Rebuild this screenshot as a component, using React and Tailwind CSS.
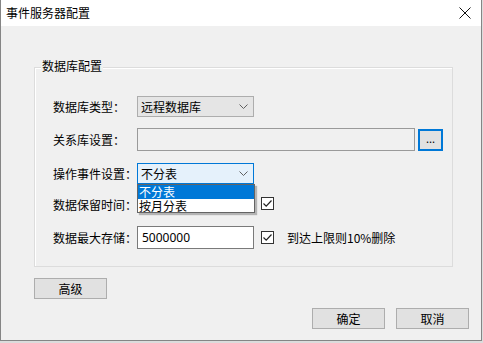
import React from "react";

const F = { fontFamily: '"Noto Sans CJK SC", "Noto Sans", sans-serif' };

function Chevron({ color = "#606060" }) {
  return (
    <svg width="9" height="5" viewBox="0 0 9 5" className="block">
      <path d="M0.5 0.5 L4.5 4.5 L8.5 0.5" fill="none" stroke={color} strokeWidth="1" />
    </svg>
  );
}

function Check() {
  return (
    <div className="w-[13px] h-[13px] border border-[#333] bg-white flex items-center justify-center">
      <svg width="11" height="11" viewBox="0 0 11 11" className="block">
        <path d="M1.5 5.5 L4.2 8.2 L9.5 2.5" fill="none" stroke="#222" strokeWidth="1.2" />
      </svg>
    </div>
  );
}

function Label({ children }) {
  return <div className="w-[84px] text-[12px] leading-none text-black whitespace-nowrap">{children}</div>;
}

function Btn({ children, className = "" }) {
  return (
    <div className={"w-[73px] h-[21px] bg-[#e1e1e1] border border-[#adadad] flex items-center justify-center text-[12px] text-black " + className}>
      {children}
    </div>
  );
}

export default function App() {
  return (
    <div className="w-[483px] h-[343px] bg-[#dcdcdc] overflow-hidden" style={F}>
      <div className="w-[482px] h-[341px] bg-[#f0f0f0] border-l border-r border-b border-[#858585] flex flex-col">
        <div className="h-[26px] bg-white flex items-center justify-between pl-[5px] pr-[10px] shrink-0">
          <span className="text-[12px] text-black leading-none">事件服务器配置</span>
          <svg width="12" height="12" viewBox="0 0 12 12" className="block">
            <path d="M0.5 0.5 L11.5 11.5 M11.5 0.5 L0.5 11.5" stroke="#111" strokeWidth="1" />
          </svg>
        </div>

        <div className="relative ml-[33px] mt-[41px] w-[419px] h-[200px] border border-[#dcdcdc] shadow-[inset_1px_1px_0_#ffffff] pl-[18px] pt-[28px] flex flex-col">
          <span className="absolute -top-[8px] left-[6px] bg-[#f0f0f0] px-[1px] text-[12px] leading-none text-black">数据库配置</span>

          <div className="h-[21px] flex items-center">
            <Label>数据库类型：</Label>
            <div className="w-[117px] h-[21px] bg-[#e5e5e5] border border-[#adadad] flex items-center justify-between pl-[3px] pr-[5px] text-[12px]">
              <span>远程数据库</span>
              <Chevron />
            </div>
          </div>

          <div className="h-[23px] mt-[11px] flex items-center">
            <Label>关系库设置：</Label>
            <div className="w-[278px] h-[23px] bg-[#f0f0f0] border border-[#9a9a9a]" />
            <div className="ml-[3px] w-[25px] h-[22px] bg-[#e1e1e1] border-2 border-[#0078d7] flex items-center justify-center text-[11px] leading-none pb-[2px]">...</div>
          </div>

          <div className="h-[21px] mt-[12px] flex items-center relative z-10">
            <Label>操作事件设置：</Label>
            <div className="relative w-[117px] h-[21px]">
              <div className="w-full h-full bg-[#e5f1fb] border border-[#0078d7] flex items-center justify-between pl-[3px] pr-[5px] text-[12px]">
                <span>不分表</span>
                <Chevron />
              </div>
              <div className="absolute left-0 top-full w-[118px] border border-[#646464] bg-white shadow-[2px_2px_1px_rgba(0,0,0,0.25)]">
                <div className="h-[14px] bg-[#0078d7] text-white text-[12px] leading-[14px] pl-[1px]">不分表</div>
                <div className="h-[13px] text-black text-[12px] leading-[13px] pl-[1px]">按月分表</div>
              </div>
            </div>
          </div>

          <div className="h-[22px] mt-[10px] flex items-center">
            <Label>数据保留时间：</Label>
            <div className="w-[117px]" />
            <div className="ml-[7px] -mt-[3px]"><Check /></div>
          </div>

          <div className="h-[23px] mt-[10px] flex items-center">
            <Label>数据最大存储：</Label>
            <div className="w-[117px] h-[23px] bg-white border border-[#7a7a7a] flex items-center pl-[4px] text-[12px]">
              <span style={{ fontFamily: '"Noto Sans", sans-serif' }}>5000000</span>
            </div>
            <div className="ml-[7px]"><Check /></div>
            <span className="ml-[13px] text-[12px] leading-none">到达上限则10%删除</span>
          </div>
        </div>

        <div className="ml-[33px] mt-[11px]">
          <Btn>高级</Btn>
        </div>

        <div className="mt-[9px] flex justify-end gap-[11px] pr-[12px]">
          <Btn>确定</Btn>
          <Btn>取消</Btn>
        </div>
      </div>
    </div>
  );
}
